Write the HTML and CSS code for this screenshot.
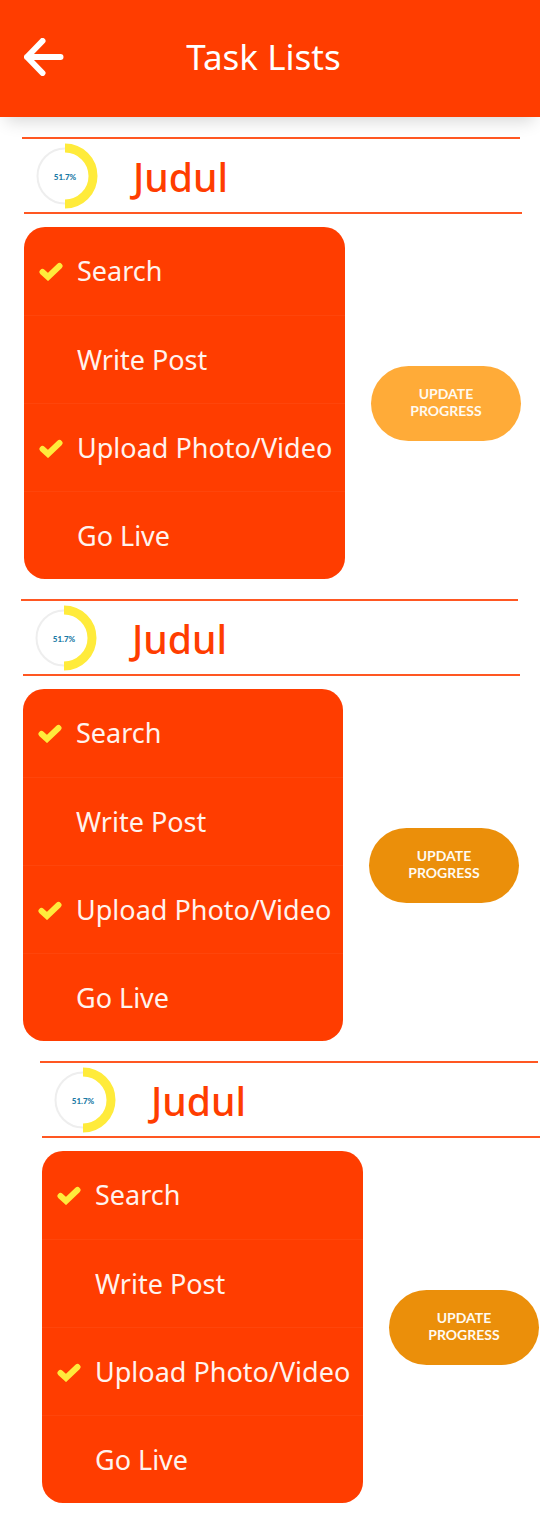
FILE: index.html
```html
<!DOCTYPE html>
<html lang="en">
<head>
<meta charset="utf-8">
<meta name="viewport" content="width=device-width, initial-scale=1">
<title>Task Lists</title>
<link rel="stylesheet" href="styles.css">
</head>
<body>
<header class="topbar">
  <button class="back" type="button" aria-label="Back">
    <svg viewBox="0 0 40 38" width="40" height="38" aria-hidden="true"><path d="M18.500 3 L3 19 L18.500 35 M3 19 H36.500" /></svg>
  </button>
  <h1 class="topbar-title">Task Lists</h1>
</header>
<main class="lists">
  <section class="task-list">
    <div class="list-head">
      <div class="ring">
        <svg viewBox="0 0 66 66" width="66" height="66" aria-hidden="true"><circle class="ring-track" cx="33" cy="33" r="27.500" /><path class="ring-value" d="M33 5 A28 28 0 0 1 33 61" /></svg>
        <span class="ring-label">51.7%</span>
      </div>
      <h2 class="list-title">Judul</h2>
    </div>
    <div class="list-body">
      <ul class="card">
        <li><label class="task"><input type="checkbox" checked><svg class="tick" viewBox="0 0 24 20" aria-hidden="true"><path d="M3.500 11 L9 16 L20.500 5" /></svg><span>Search</span></label></li>
        <li><label class="task"><input type="checkbox"><svg class="tick" viewBox="0 0 24 20" aria-hidden="true"><path d="M3.500 11 L9 16 L20.500 5" /></svg><span>Write Post</span></label></li>
        <li><label class="task"><input type="checkbox" checked><svg class="tick" viewBox="0 0 24 20" aria-hidden="true"><path d="M3.500 11 L9 16 L20.500 5" /></svg><span>Upload Photo/Video</span></label></li>
        <li><label class="task"><input type="checkbox"><svg class="tick" viewBox="0 0 24 20" aria-hidden="true"><path d="M3.500 11 L9 16 L20.500 5" /></svg><span>Go Live</span></label></li>
      </ul>
      <button class="update update-light" type="button">UPDATE<br>PROGRESS</button>
    </div>
  </section>
  <section class="task-list task-list-second">
    <div class="list-head">
      <div class="ring">
        <svg viewBox="0 0 66 66" width="66" height="66" aria-hidden="true"><circle class="ring-track" cx="33" cy="33" r="27.500" /><path class="ring-value" d="M33 5 A28 28 0 0 1 33 61" /></svg>
        <span class="ring-label">51.7%</span>
      </div>
      <h2 class="list-title">Judul</h2>
    </div>
    <div class="list-body">
      <ul class="card">
        <li><label class="task"><input type="checkbox" checked><svg class="tick" viewBox="0 0 24 20" aria-hidden="true"><path d="M3.500 11 L9 16 L20.500 5" /></svg><span>Search</span></label></li>
        <li><label class="task"><input type="checkbox"><svg class="tick" viewBox="0 0 24 20" aria-hidden="true"><path d="M3.500 11 L9 16 L20.500 5" /></svg><span>Write Post</span></label></li>
        <li><label class="task"><input type="checkbox" checked><svg class="tick" viewBox="0 0 24 20" aria-hidden="true"><path d="M3.500 11 L9 16 L20.500 5" /></svg><span>Upload Photo/Video</span></label></li>
        <li><label class="task"><input type="checkbox"><svg class="tick" viewBox="0 0 24 20" aria-hidden="true"><path d="M3.500 11 L9 16 L20.500 5" /></svg><span>Go Live</span></label></li>
      </ul>
      <button class="update" type="button">UPDATE<br>PROGRESS</button>
    </div>
  </section>
  <section class="task-list task-list-third">
    <div class="list-head">
      <div class="ring">
        <svg viewBox="0 0 66 66" width="66" height="66" aria-hidden="true"><circle class="ring-track" cx="33" cy="33" r="27.500" /><path class="ring-value" d="M33 5 A28 28 0 0 1 33 61" /></svg>
        <span class="ring-label">51.7%</span>
      </div>
      <h2 class="list-title">Judul</h2>
    </div>
    <div class="list-body">
      <ul class="card">
        <li><label class="task"><input type="checkbox" checked><svg class="tick" viewBox="0 0 24 20" aria-hidden="true"><path d="M3.500 11 L9 16 L20.500 5" /></svg><span>Search</span></label></li>
        <li><label class="task"><input type="checkbox"><svg class="tick" viewBox="0 0 24 20" aria-hidden="true"><path d="M3.500 11 L9 16 L20.500 5" /></svg><span>Write Post</span></label></li>
        <li><label class="task"><input type="checkbox" checked><svg class="tick" viewBox="0 0 24 20" aria-hidden="true"><path d="M3.500 11 L9 16 L20.500 5" /></svg><span>Upload Photo/Video</span></label></li>
        <li><label class="task"><input type="checkbox"><svg class="tick" viewBox="0 0 24 20" aria-hidden="true"><path d="M3.500 11 L9 16 L20.500 5" /></svg><span>Go Live</span></label></li>
      </ul>
      <button class="update" type="button">UPDATE<br>PROGRESS</button>
    </div>
  </section>
</main>
</body>
</html>
```
FILE: styles.css
```css
:root {
  --orange: #ff3d00;
  --yellow: #ffeb3b;
}

* {
  box-sizing: border-box;
}

body {
  margin: 0;
  background: #fff;
  font-family: "Noto Sans", "Open Sans", sans-serif;
}

.topbar {
  display: flex;
  align-items: center;
  min-height: 117px;
  padding: 0 77px 3px 24px;
  background: var(--orange);
  box-shadow: 0 10px 16px -6px rgba(0, 0, 0, 0.16);
}

.back {
  display: flex;
  padding: 0;
  border: 0;
  background: none;
}

.back path {
  fill: none;
  stroke: #fff;
  stroke-width: 6;
  stroke-linecap: round;
  stroke-linejoin: round;
}

.topbar-title {
  flex: 1;
  margin: 0;
  color: #fff;
  font-size: 35px;
  font-weight: 400;
  line-height: 40px;
  text-align: center;
}

.lists {
  display: flex;
  flex-direction: column;
  gap: 20px;
  padding: 20px 0 27px;
}

.task-list {
  margin: 0 18px 0 22px;
}

.task-list-second {
  margin: 0 20px 0 21px;
}

.task-list-third {
  margin: 0 0 0 40px;
}

.list-head {
  display: flex;
  align-items: center;
  gap: 35px;
  min-height: 75px;
  margin-right: 2px;
  padding-left: 10px;
  border-top: 2px solid #ff5722;
}

.ring {
  display: grid;
  place-items: center;
}

.ring > * {
  grid-area: 1 / 1;
}

.ring-track {
  fill: none;
  stroke: #eee;
  stroke-width: 2;
}

.ring-value {
  fill: none;
  stroke: var(--yellow);
  stroke-width: 9;
}

.ring-label {
  padding-top: 2px;
  color: #1b7aa6;
  font-family: Lato, sans-serif;
  font-size: 8px;
  font-weight: 900;
  line-height: 10px;
}

.list-title {
  margin: 0;
  padding-top: 2px;
  color: var(--orange);
  font-size: 39px;
  font-weight: 500;
  line-height: 48px;
}

.list-body {
  display: flex;
  align-items: center;
  gap: 26px;
  margin-left: 2px;
  padding: 13px 1px 0 0;
  border-top: 2px solid #ff5722;
}

.card {
  flex: 1;
  margin: 0;
  padding: 0;
  overflow: hidden;
  border-radius: 21px;
  background: var(--orange);
  list-style: none;
}

.card li + li {
  border-top: 1px solid #ff450b;
}

.task {
  display: grid;
  grid-template-columns: 24px 1fr;
  align-items: center;
  column-gap: 14px;
  min-height: 88px;
  padding-left: 15px;
  color: #fff3ee;
  font-size: 27px;
  line-height: 36px;
}

.card li + li .task {
  min-height: 87px;
}

.task input {
  grid-area: 1 / 1;
  width: 24px;
  height: 24px;
  margin: 0;
  appearance: none;
}

.tick {
  grid-area: 1 / 1;
  width: 24px;
  height: 20px;
  visibility: hidden;
  pointer-events: none;
}

.task input:checked + .tick {
  visibility: visible;
}

.tick path {
  fill: none;
  stroke: var(--yellow);
  stroke-width: 6;
  stroke-linecap: round;
}

.update {
  flex: none;
  width: 150px;
  min-height: 75px;
  padding: 0 0 2px;
  border: 0;
  border-radius: 38px;
  background: #eb8f0a;
  color: #fffaf0;
  font-family: Lato, sans-serif;
  font-size: 14px;
  font-weight: 700;
  line-height: 17px;
}

.update-light {
  background: #ffab38;
}
```
